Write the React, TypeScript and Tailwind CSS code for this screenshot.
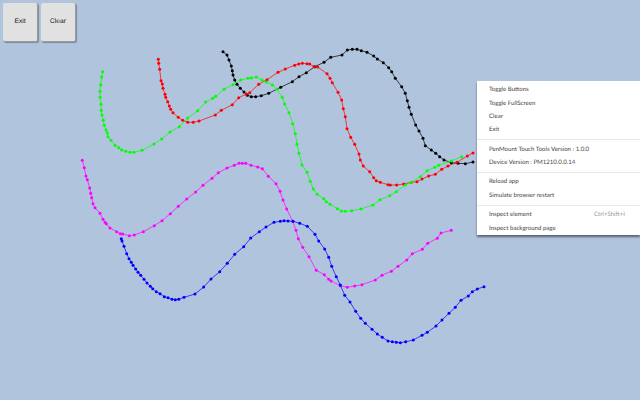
const strokes = [
  {
    color: "#000000",
    points: "223,51.7 227,55 229,60 231.3,66 232.3,70.7 233,75 234.7,80 237,84.3 240.3,88.3 244,92 247.3,95.3 251.3,96.7 255.7,96.7 261.3,95.7 268.7,93.3 280.7,87.3 292.3,81.7 299,76.7 306.3,72.7 314.7,66.7 324,62.3 330.7,57.3 342,55 347.3,50 352.3,49.3 357,49.3 361.3,50.7 367,52.3 373.7,56 377.3,59 383.3,62.7 388.7,67.7 391.7,71.7 395.3,78.3 401.7,86.7 405.3,93.3 407.3,100.7 409,107.3 411.3,114.3 415.7,125 419,131 423,138.3 425.3,145.7 431.3,150 435.7,153.3 439.7,156.7 444,160 451.3,162.7 458,163.3 465.3,163.7 473,162",
  },
  {
    color: "#ff0000",
    points: "158.3,59.3 158.7,63.3 159.7,69.3 161,80.7 162.3,84 163,88.3 165,94.3 165.7,97.3 167.7,101.7 169.3,106 170.7,109.3 173,112.7 178.3,117.3 182.7,120.3 187.7,122.3 193.3,122.3 199,121 215.3,115 221.3,110.3 232.3,104.7 238.7,97.7 246.3,94 249.7,92.7 258.7,84.3 267,79.7 278,72.3 285.3,69 294.7,65.3 298.7,64 302.3,63.3 307,63.7 309.7,64 314,66.7 317.7,67 327,73.7 330,78.3 332.3,82.7 338,92.3 341.7,100 343.3,108.7 345.3,116.7 347,128.7 350.7,137.3 354.7,144.3 359,154 360.3,160 363.3,166 369.7,171.7 373.7,177.7 376.3,180.7 380.3,182.3 388,184.7 390.3,185 396.7,185 403.7,184 411.3,182.3 417,181.7 422,179 428.7,176 435.3,174.3 441.7,169.3 448,166 457,162.3 467.3,156 473,153",
  },
  {
    color: "#00ff00",
    points: "102.7,71.7 101.7,77 100.7,84.7 100,91.3 100,97.3 101,104.3 101.3,110.3 102,115 103.3,120.3 104.3,125.3 106,130 107.3,133 108,136.7 111,140.3 115,145.3 118.7,147.7 121.7,150 125.7,151.3 130,152.3 134,152.3 142,150.3 154,144 161.7,139 170,132 179.3,126.7 187.7,118 197.7,110.7 205.7,102 212.7,98.3 215.7,96.3 224,89.3 233,84.7 240.7,80 248,78.3 251.3,78 256.3,77 262,80 266.3,82 272.3,85 277,89.3 282.3,97.3 284.7,104 289,112.7 292.7,123.7 295.3,133.7 297,144.3 299,153.3 302,165 307,172.3 310.3,181.3 313.3,189 317.3,194.3 323.7,198.7 326.3,201.7 330,204.3 337.3,208.7 341.3,211 345.3,211.3 351.7,210.7 361,209 373,205 380,199.7 389.7,195.7 396.3,191.7 405.3,185 411.3,182.3 420.3,176.7 427,170.7 434.7,167.3 438.7,165.3 451.3,161 461.7,156.7",
  },
  {
    color: "#ff00ff",
    points: "82.3,160.3 84.3,167.7 86,176 87.3,179.7 89.7,188 90.7,193.3 91.7,197.7 93,203.7 95,207.7 100,213.3 103,219.3 105,222.3 106.3,223.7 110,228 116.7,231.7 120.3,233.7 122.7,234 129.3,235.7 134.3,235 143.3,231.7 154.3,225.7 162,220.7 170.3,213.7 178.3,206.3 186.7,199 195.7,192 203,185.3 212,178.3 218.3,172.7 227,168 234.3,165.3 239,163.3 242.3,163.3 245.7,163.3 251,165.3 257.7,167 262.3,168.7 268.3,176.3 276,183.7 280,191.3 283,200 286.7,209 292.7,221.3 296,230.3 298.3,238.7 302.7,247.3 309,256.7 316.3,270.3 324.3,274.7 328.7,279.3 331,281 340.3,285.7 347.3,287.3 354.7,286 362,284.7 375.3,280 382,275.3 391.3,271.3 398,266.3 406.7,260 412.3,253.7 422.3,249.3 427.7,243.3 437.3,238.3 441,233 451.3,230.3",
  },
  {
    color: "#0000ff",
    points: "121.3,238.7 122,241 124,246.3 126.7,253.7 129,258.7 131.3,262.3 133,265.3 135.7,269 138,272.3 140.7,275.3 144,279.3 147,283 150.3,286.3 152.7,288.7 156.3,291.7 160,293.7 164.3,296.7 168,297.7 172,299.3 175.3,299.7 178.7,299.3 184,297.3 195,294 203.7,287 211,279 219.7,271.7 227.3,263.3 234.7,254.3 243.7,246.7 250.7,238 259.3,231.7 266,227 274,222.3 280.3,221.3 284,220.7 288,221 293,221.3 299.7,223.3 307.3,226.3 315,234.3 318.7,241 324.7,249 328.7,257.3 331.7,266.3 336.3,276.7 340.3,285 344.7,295.3 350,302 355.7,311.3 360.7,318.3 365.3,323.3 372,329.3 377.3,334 382.3,337.3 388,341 392.3,341.7 396.3,342.3 400.3,342.7 405.7,341.7 413.3,340 422,335.3 427.3,332.3 436,326 442,320 449,313.3 455.3,307.3 461,300.3 468.3,296 472.3,291.7 477.3,289 484,286.7",
  },
];

const menuGroups = [
  [{ label: "Toggle Buttons" }, { label: "Toggle FullScreen" }, { label: "Clear" }, { label: "Exit" }],
  [{ label: "PenMount Touch Tools Version : 1.0.0" }, { label: "Device Version : PM1210.0.0.14" }],
  [{ label: "Reload app" }, { label: "Simulate browser restart" }],
  [{ label: "Inspect element", shortcut: "Ctrl+Shift+I" }, { label: "Inspect background page" }],
];

const ToolButton = ({ label }: { label: string }) => (
  <button className="w-[35px] h-[39px] bg-[#e1e1e1] rounded-[2px] border-r border-b border-[#9a9a9a] shadow-[1px_1px_1px_rgba(0,0,0,0.3)] font-['Liberation_Sans',sans-serif] text-[6.7px] text-[#111111] [text-rendering:geometricPrecision]">
    {label}
  </button>
);

const App = () => {
  return (
    <div className="relative w-[640px] h-[400px] overflow-hidden bg-[#b0c4de] font-['Lato',sans-serif] [text-rendering:geometricPrecision]">
      {/* Drawn strokes */}
      <svg className="absolute inset-0" width="640" height="400" viewBox="0 0 640 400">
        {strokes.map((stroke, index) => (
          <g key={index} fill={stroke.color} stroke={stroke.color}>
            <polyline points={stroke.points} fill="none" strokeWidth="0.7" />
            {stroke.points.split(" ").map((point) => {
              const [x, y] = point.split(",");
              return <circle key={point} cx={x} cy={y} r="1.5" strokeWidth="0" />;
            })}
          </g>
        ))}
      </svg>

      <div className="relative flex gap-[3px] pt-[3px] pl-[3px]">
        <ToolButton label="Exit" />
        <ToolButton label="Clear" />
      </div>

      {/* Context menu */}
      <div className="absolute left-[477px] top-[81px] w-[163px] h-[154px] pt-[2px] bg-white shadow-[0px_2px_2px_rgba(0,0,0,0.5)] text-[#444444]">
        {menuGroups.map((group, index) => (
          <div key={index} className={index > 0 ? "border-t border-[#e9e9e9] mt-[2.5px] pt-[2.5px]" : ""}>
            {group.map((item) => (
              <div key={item.label} className="flex justify-between h-[13.4px] pl-[12px] pr-[15px] items-center text-[6.1px]">
                <span>{item.label}</span>
                {item.shortcut && <span className="text-[#999999]">{item.shortcut}</span>}
              </div>
            ))}
          </div>
        ))}
      </div>
    </div>
  );
};

export default App;
